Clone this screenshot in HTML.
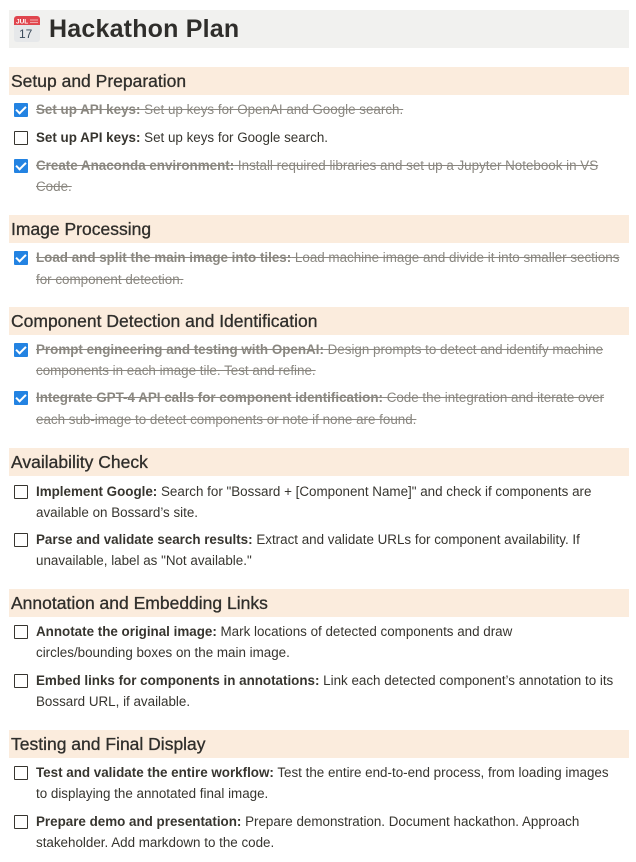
<!DOCTYPE html>
<html><head><meta charset="utf-8"><style>
*{margin:0;padding:0;box-sizing:border-box}
body{width:636px;height:862px;background:#fff;font-family:"Segoe UI","Liberation Sans",sans-serif;color:#37352f;position:relative;overflow:hidden}
.title{position:absolute;left:9px;top:10px;width:620px;height:38px;background:#f1f1ef}
.title h1{position:absolute;left:40px;top:5px;font-size:25px;font-weight:600;letter-spacing:0.2px;color:#2f2e2b}
.cal{position:absolute;left:5px;top:6px;width:26px;height:26px}
.h{position:absolute;left:9px;width:620px;height:28px;background:#fbecdd;font-size:17.5px;font-weight:500;padding-left:2px;line-height:28px;color:#2f2e2b;-webkit-text-stroke:0.3px #2f2e2b}
.l{position:absolute;left:36px;font-size:13.4px;line-height:21px;white-space:nowrap;color:#37352f}
.l b{font-weight:600}
.d{color:#8a8780;text-decoration:line-through;text-decoration-color:#8a8780}
.cb{position:absolute;left:14px;width:14px;height:14px;border:1.6px solid #37352f;border-radius:1px}
.ck{position:absolute;left:14px;width:14px;height:14px;background:#2383e2;border-radius:1px}
.ck:after{content:"";position:absolute;left:4px;top:1px;width:4px;height:8px;border:solid #fff;border-width:0 2px 2px 0;transform:rotate(45deg)}
</style></head><body>
<div class="title"><svg class="cal" viewBox="0 0 26 26"><rect x="0" y="0" width="26" height="26" rx="3" fill="#e6e8ea"/><path d="M3 0h20a3 3 0 0 1 3 3v6H0V3a3 3 0 0 1 3-3z" fill="#e0464e"/><text x="2" y="7.5" font-size="6.5" font-family="Liberation Sans" font-weight="bold" fill="#fff">JUL</text><circle cx="17" cy="4" r="0.6" fill="#fff"/><circle cx="19" cy="4" r="0.6" fill="#fff"/><circle cx="21" cy="4" r="0.6" fill="#fff"/><circle cx="23" cy="4" r="0.6" fill="#fff"/><circle cx="17" cy="6.5" r="0.6" fill="#fff"/><circle cx="19" cy="6.5" r="0.6" fill="#fff"/><circle cx="21" cy="6.5" r="0.6" fill="#fff"/><circle cx="23" cy="6.5" r="0.6" fill="#fff"/><text x="5" y="22" font-size="12" font-family="Liberation Sans" fill="#3a4a5a">17</text></svg><h1>Hackathon Plan</h1></div>

<div class="h" style="top:67px">Setup and Preparation</div>
<div class="ck" style="top:103px"></div><div class="l d" style="top:99px"><b>Set up API keys:</b> Set up keys for OpenAI and Google search.</div>
<div class="cb" style="top:131px"></div><div class="l" style="top:127px"><b>Set up API keys:</b> Set up keys for Google search.</div>
<div class="ck" style="top:159px"></div><div class="l d" style="top:155px"><b>Create Anaconda environment:</b> Install required libraries and set up a Jupyter Notebook in VS</div><div class="l d" style="top:176px">Code.</div>

<div class="h" style="top:215px">Image Processing</div>
<div class="ck" style="top:251px"></div><div class="l d" style="top:247px"><b>Load and split the main image into tiles:</b> Load machine image and divide it into smaller sections</div><div class="l d" style="top:269px">for component detection.</div>

<div class="h" style="top:307px">Component Detection and Identification</div>
<div class="ck" style="top:343px"></div><div class="l d" style="top:339px"><b>Prompt engineering and testing with OpenAI:</b> Design prompts to detect and identify machine</div><div class="l d" style="top:360px">components in each image tile. Test and refine.</div>
<div class="ck" style="top:391px"></div><div class="l d" style="top:387px"><b>Integrate GPT-4 API calls for component identification:</b> Code the integration and iterate over</div><div class="l d" style="top:409px">each sub-image to detect components or note if none are found.</div>

<div class="h" style="top:448px">Availability Check</div>
<div class="cb" style="top:485px"></div><div class="l" style="top:481px"><b>Implement Google:</b> Search for "Bossard + [Component Name]" and check if components are</div><div class="l" style="top:502px">available on Bossard’s site.</div>
<div class="cb" style="top:533px"></div><div class="l" style="top:529px"><b>Parse and validate search results:</b> Extract and validate URLs for component availability. If</div><div class="l" style="top:550px">unavailable, label as "Not available."</div>

<div class="h" style="top:589px">Annotation and Embedding Links</div>
<div class="cb" style="top:625px"></div><div class="l" style="top:621px"><b>Annotate the original image:</b> Mark locations of detected components and draw</div><div class="l" style="top:642px">circles/bounding boxes on the main image.</div>
<div class="cb" style="top:674px"></div><div class="l" style="top:670px"><b>Embed links for components in annotations:</b> Link each detected component’s annotation to its</div><div class="l" style="top:691px">Bossard URL, if available.</div>

<div class="h" style="top:730px">Testing and Final Display</div>
<div class="cb" style="top:766px"></div><div class="l" style="top:762px"><b>Test and validate the entire workflow:</b> Test the entire end-to-end process, from loading images</div><div class="l" style="top:783px">to displaying the annotated final image.</div>
<div class="cb" style="top:815px"></div><div class="l" style="top:811px"><b>Prepare demo and presentation:</b> Prepare demonstration. Document hackathon. Approach</div><div class="l" style="top:832px">stakeholder. Add markdown to the code.</div>
</body></html>
